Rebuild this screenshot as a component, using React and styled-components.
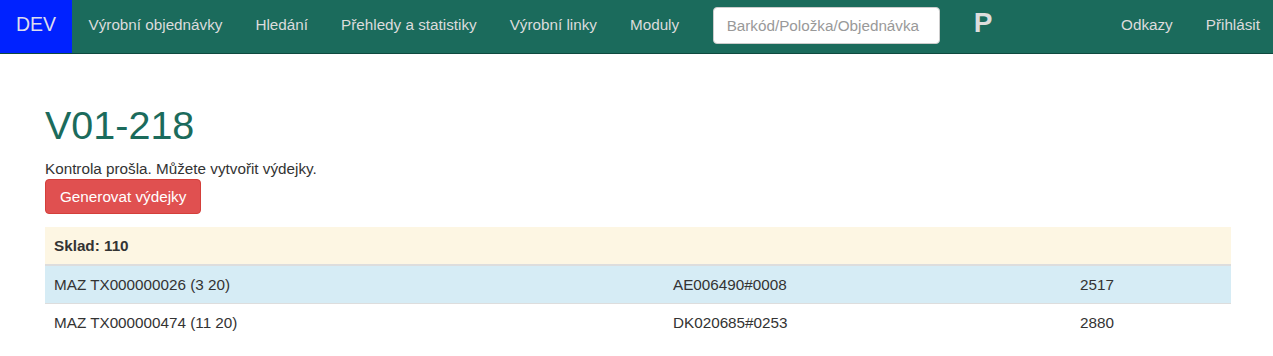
import React from "react";
import styled, { createGlobalStyle } from "styled-components";

const Global = createGlobalStyle`
  html, body { margin: 0; padding: 0; background: #fff; }
  body { font-family: "Liberation Sans", Arial, Helvetica, sans-serif; font-size: 15.25px; color: #333; line-height: 1.42857; }
  * { box-sizing: border-box; }
`;

const Navbar = styled.nav`
  display: flex;
  align-items: stretch;
  height: 54px;
  background: #1b6b5c;
  border-bottom: 1px solid #0f4a3f;
`;

const Brand = styled.div`
  width: 72px;
  padding-top: 14px;
  background: #0022ff;
  color: #dde;
  font-size: 19.5px;
  line-height: 20px;
  text-align: center;
`;

const NavList = styled.div`
  display: flex;
  align-items: flex-start;
  margin-left: ${p => (p.$right ? "auto" : "0")};
`;

const NavLink = styled.a`
  display: block;
  padding: 15px ${p => p.$pr ?? 16.5}px 15px 16.5px;
  color: #dcdcdc;
  font-size: 15.25px;
  text-decoration: none;
  line-height: 20px;
`;

const Search = styled.input`
  width: 227px;
  height: 37px;
  margin: 7px 0 0 17px;
  border: 1px solid #ccc;
  border-radius: 4px;
  padding: 6px 13px;
  font-family: inherit;
  font-size: 15.25px;
  color: #555;
  &::placeholder { color: #999; }
`;

const Logo = styled.span`
  margin: 9px 0 0 34px;
  font-size: 28px;
  font-weight: bold;
  color: #ddd;
  line-height: 28px;
`;

const Container = styled.main`
  padding: 0 42px 0 45px;
`;

const Title = styled.h1`
  margin: 50px 0 11px;
  font-size: 39.5px;
  font-weight: 500;
  line-height: 1.1;
  color: #1b6b5c;
`;

const Note = styled.p`
  margin: 0;
  line-height: 21px;
`;

const Button = styled.button`
  display: inline-block;
  height: 35px;
  padding: 0 14px;
  background: #e05050;
  border: 1px solid #d43f3a;
  border-radius: 4px;
  color: #fff;
  font-family: inherit;
  font-size: 15.25px;
`;

const Table = styled.table`
  width: 100%;
  border-collapse: collapse;
  margin-top: 13px;
`;

const Cell = styled.td`
  padding: 8px 9px;
  line-height: 21px;
  width: ${p => p.$w || "auto"};
  font-weight: ${p => (p.$bold ? "bold" : "normal")};
`;

const Row = styled.tr`
  background: ${p => p.$bg || "transparent"};
  & > td { border-top: ${p => (p.$first ? "none" : "1px solid #ddd")}; }
  border-bottom: ${p => (p.$head ? "2px solid #ddd" : "none")};
`;

const rows = [
  { a: "MAZ TX000000026 (3 20)", b: "AE006490#0008", c: "2517", bg: "#d6ecf5" },
  { a: "MAZ TX000000474 (11 20)", b: "DK020685#0253", c: "2880" },
];

export default function App() {
  return (
    <>
      <Global />
      <Navbar>
        <Brand>DEV</Brand>
        <NavList>
          <NavLink>Výrobní objednávky</NavLink>
          <NavLink>Hledání</NavLink>
          <NavLink>Přehledy a statistiky</NavLink>
          <NavLink>Výrobní linky</NavLink>
          <NavLink>Moduly</NavLink>
          <Search placeholder="Barkód/Položka/Objednávka" />
          <Logo>P</Logo>
        </NavList>
        <NavList $right>
          <NavLink>Odkazy</NavLink>
          <NavLink $pr={13}>Přihlásit</NavLink>
        </NavList>
      </Navbar>
      <Container>
        <Title>V01-218</Title>
        <Note>Kontrola prošla. Můžete vytvořit výdejky.</Note>
        <Button>Generovat výdejky</Button>
        <Table>
          <tbody>
            <Row $bg="#fdf6e3" $first $head>
              <Cell $bold colSpan={3}>Sklad: 110</Cell>
            </Row>
            {rows.map((r, i) => (
              <Row key={i} $bg={r.bg}>
                <Cell $w="619px">{r.a}</Cell>
                <Cell $w="407px">{r.b}</Cell>
                <Cell>{r.c}</Cell>
              </Row>
            ))}
          </tbody>
        </Table>
      </Container>
    </>
  );
}
